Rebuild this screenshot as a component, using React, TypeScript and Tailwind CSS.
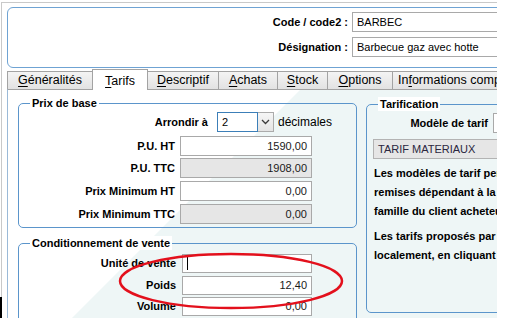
import React from "react";

type FieldProps = {
  label: string;
  value?: string;
  gray?: boolean;
  small?: boolean;
  cursor?: boolean;
  className?: string;
};

function Field({ label, value, gray, small, cursor, className = "" }: FieldProps) {
  return (
    <div className={`flex items-center ${small ? "h-[19px]" : "h-[20px]"} ${className}`}>
      <span className={`${small ? "w-[157px]" : "w-[156px]"} text-right text-[11px] font-bold leading-none`}>{label}</span>
      <div
        className={`${small ? "ml-[6px] w-[130px]" : "ml-[5px] w-[132px]"} h-full border border-[#a9a9a9] flex items-center justify-end pr-[4px] text-[11px] text-[#1a1a1a] ${gray ? "bg-[#e6e6e6]" : "bg-white"}`}
      >
        {cursor && <span className="mr-auto ml-[4px] w-px h-[13px] bg-black" />}
        {value}
      </div>
    </div>
  );
}

type TabProps = { first: string; rest: string; before?: string; w: string; active?: boolean };

function Tab({ first, rest, before = "", w, active }: TabProps) {
  if (active) {
    return (
      <div className={`relative z-10 -mb-px -ml-px shrink-0 h-[21px] ${w} bg-white border border-b-0 border-[#a3a3a3] flex items-start justify-center pt-[2px] text-[12.5px] whitespace-nowrap`}>
        <span>
          {before}
          <u className="underline-offset-2">{first}</u>
          {rest}
        </span>
      </div>
    );
  }
  return (
    <div className={`-ml-px first:ml-0 shrink-0 h-[18px] ${w} border border-b-0 border-[#a3a3a3] bg-gradient-to-b from-[#f4f4f4] to-[#e2e2e2] flex items-center justify-center text-[12.5px] whitespace-nowrap`}>
      <span>
        {before}
        <u className="underline-offset-2">{first}</u>
        {rest}
      </span>
    </div>
  );
}

export default function App() {
  return (
    <div className="w-[507px] h-[327px] bg-white font-['Liberation_Sans',Arial,sans-serif] text-black">
      <div className="relative w-[497px] h-[318px] overflow-hidden">
        <div className="h-full w-[640px] pl-px pt-[2px]">
          <div className="h-full border-l border-t border-[#c9c9c9] pl-[5px] pt-[4px]">
            {/* header */}
            <div className="w-[620px] h-[61px] border border-[#6fa3d3] rounded-[6px] pt-[4px]">
              <div className="flex items-center h-[20px]">
                <span className="w-[344px] pr-[4px] text-right text-[11px] font-bold">Code / code2 :</span>
                <div className="w-[250px] h-full border border-[#a9a9a9] bg-white pl-[4px] flex items-center text-[11px]">BARBEC</div>
              </div>
              <div className="flex items-center h-[20px] mt-[5px]">
                <span className="w-[344px] pr-[4px] text-right text-[11px] font-bold">Désignation :</span>
                <div className="w-[250px] h-full border border-[#a9a9a9] bg-white pl-[4px] flex items-center text-[11px]">
                  Barbecue gaz avec hotte
                </div>
              </div>
            </div>

            {/* tabs */}
            <div className="mt-px flex items-end h-[20px] w-[620px]">
              <Tab first="G" rest="énéralités" w="w-[86px]" />
              <Tab first="T" rest="arifs" w="w-[56px]" active />
              <Tab first="D" rest="escriptif" w="w-[72px]" />
              <Tab first="A" rest="chats" w="w-[60px]" />
              <Tab first="S" rest="tock" w="w-[51px]" />
              <Tab first="O" rest="ptions" w="w-[66px]" />
              <div className="-ml-px shrink-0 h-[18px] w-[190px] border border-b-0 border-[#a3a3a3] bg-gradient-to-b from-[#f4f4f4] to-[#e2e2e2] flex items-center pl-[5px] text-[12.5px] whitespace-nowrap">
                <span>
                  In<u className="underline-offset-2">f</u>ormations complémentaires
                </span>
              </div>
            </div>

            {/* tab content */}
            <div className="relative w-[620px] h-[260px] border-l border-t border-l-[#9bbad8] border-t-[#a3a3a3]">
              <svg className="absolute inset-0" width="620" height="260">
                <polygon points="292,0 620,0 620,260 32,260" fill="#eef6f6" />
              </svg>
              <div className="relative flex pl-[10px]">
                {/* left column */}
                <div className="w-[339px] shrink-0 mt-[6px]">
                  <fieldset className="border border-[#5b95cb] rounded-[5px] pb-[3px]">
                    <legend className="ml-[11px] px-[2px] bg-white text-[11px] font-bold leading-[14px]">Prix de base</legend>
                    <div className="flex items-center h-[20px] mt-[2px]">
                      <span className="w-[189px] text-right text-[11px] font-bold">Arrondir à</span>
                      <div className="ml-[9px] w-[41px] h-full border border-[#3c7fb8] bg-white pl-[4px] flex items-center text-[11px]">2</div>
                      <div className="w-[16px] h-full border border-l-0 border-[#ababab] bg-gradient-to-b from-[#f6f6f6] to-[#e4e4e4] flex items-center justify-center">
                        <svg width="9" height="6" viewBox="0 0 9 6">
                          <path d="M1 1 L4.5 4.5 L8 1" fill="none" stroke="#3a3a3a" strokeWidth="1.3" />
                        </svg>
                      </div>
                      <span className="ml-[4px] text-[12px]">décimales</span>
                    </div>
                    <Field label="P.U. HT" value="1590,00" className="mt-[4px]" />
                    <Field label="P.U. TTC" value="1908,00" gray className="mt-[2px]" />
                    <Field label="Prix Minimum HT" value="0,00" className="mt-[3px]" />
                    <Field label="Prix Minimum TTC" value="0,00" gray className="mt-[3px]" />
                  </fieldset>

                  <fieldset className="mt-[8px] h-[100px] border border-[#5b95cb] rounded-[5px]">
                    <legend className="ml-[11px] px-[2px] bg-white text-[11px] font-bold leading-[14px]">Conditionnement de vente</legend>
                    <Field label="Unité de vente" small cursor className="mt-[4px]" />
                    <Field label="Poids" value="12,40" small className="mt-[3px]" />
                    <Field label="Volume" value="0,00" small className="mt-[2px]" />
                  </fieldset>
                </div>

                {/* right column */}
                <div className="ml-[9px] mt-[7px] w-[220px] shrink-0">
                  <fieldset className="h-[216px] border border-[#5b95cb] rounded-[5px]">
                    <legend className="ml-[11px] px-[2px] bg-white text-[11px] font-bold leading-[14px]">Tarification</legend>
                    <div className="flex items-center h-[20px] mt-[2px]">
                      <span className="w-[121px] text-right text-[11px] font-bold">Modèle de tarif</span>
                      <div className="ml-[5px] w-[80px] h-full border border-[#a9a9a9] bg-white" />
                    </div>
                    <div className="ml-[6px] mt-[6px] w-[200px] h-[20px] border border-[#b3b3b3] bg-[#e6e6e6] pl-[4px] flex items-center text-[11px] text-[#2b2740]">
                      TARIF MATERIAUX
                    </div>
                    <div className="ml-[7px] mt-[5px] text-[11px] font-bold leading-[19px] whitespace-nowrap">
                      <div>Les modèles de tarif permettent d'appliquer des</div>
                      <div>remises dépendant à la fois de l'article et de la</div>
                      <div>famille du client acheteur.</div>
                      <div className="mt-[6px]">Les tarifs proposés par le modèle sont modifiables</div>
                      <div>localement, en cliquant sur le bouton.</div>
                    </div>
                  </fieldset>
                </div>
              </div>
            </div>
          </div>
        </div>

        {/* left black mark */}
        <div className="absolute left-0 top-[297px] w-[2px] h-[21px] bg-black" />

        {/* red annotation */}
        <svg className="absolute inset-0 pointer-events-none" width="497" height="318">
          <ellipse cx="231" cy="281" rx="111" ry="27" fill="none" stroke="#e3101c" strokeWidth="2.5" />
        </svg>
      </div>
    </div>
  );
}
